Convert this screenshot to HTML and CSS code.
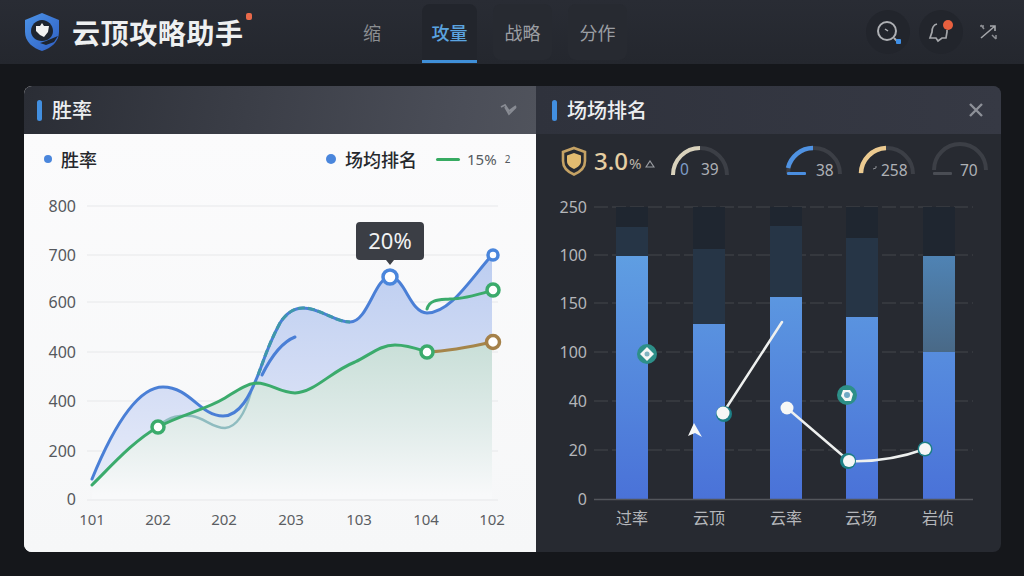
FILE: index.html
```html
<!DOCTYPE html>
<html lang="zh">
<head>
<meta charset="utf-8">
<title>云顶攻略助手</title>
<link rel="stylesheet" href="styles.css">
</head>
<body>
<header class="topbar">
  <div class="brand">
    <svg class="logo" width="36" height="40" viewBox="0 0 36 40">
      <defs>
        <linearGradient id="lg" x1="0" y1="0" x2="1" y2="1"><stop offset="0" stop-color="#4c93e6"/><stop offset="1" stop-color="#2f5fc4"/></linearGradient>
      </defs>
      <path d="M18 1 L35 8 V20 C35 30 27 36 18 39 C9 36 1 30 1 20 V8 Z" fill="url(#lg)"/>
      <path d="M18 8 C24 8 29 13 29 19 C29 25 24 29 18 29 C12 29 7 25 7 19 C7 13 12 8 18 8 Z" fill="#1e2530"/>
      <path d="M34 24 L22 29 L16 31 L22 33 L30 30 Z" fill="#1e2530"/>
      <path d="M18 11 L20 14 L25 14 L24 20 L20 25 L16 23 L12 19 L12 14 L16 14 Z" fill="#f1f2f2"/>
    </svg>
    <span class="brand-name">云顶攻略助手</span>
    <i class="brand-dot"></i>
  </div>
  <nav class="tabs">
    <a class="tab tab-plain">缩</a>
    <a class="tab tab-on">攻量</a>
    <a class="tab tab-wide">战略</a>
    <a class="tab tab-wide">分作</a>
  </nav>
  <div class="actions">
    <span class="action">
      <svg width="44" height="44" viewBox="0 0 44 44">
        <circle cx="21" cy="21" r="9" fill="none" stroke="#aeb0b4" stroke-width="2"/>
        <path d="M19 19 L22 21" stroke="#aeb0b4" stroke-width="1.5"/>
        <path d="M28 28 L32 32" stroke="#aeb0b4" stroke-width="2"/>
        <rect x="30" y="29" width="5" height="5" rx="1" fill="#3f8fe6"/>
      </svg>
    </span>
    <span class="action">
      <svg width="44" height="44" viewBox="0 0 44 44">
        <path d="M18 14 C14 15 13 19 13 22 L11 28 H17 L19 31 L23 28 H27 L28 22 V20" fill="none" stroke="#a5a7ab" stroke-width="1.7"/>
        <circle cx="29" cy="15" r="5" fill="#e8603f"/>
      </svg>
    </span>
    <svg class="expand" width="24" height="24" viewBox="0 0 24 24">
      <path d="M5 18 L19 6 M14 6 H19 V11" fill="none" stroke="#a5a7ab" stroke-width="1.6"/>
      <path d="M4 6 L8 6 M5 5 L8 9 M16 15 L20 19 M20 15 V19" fill="none" stroke="#8d8f94" stroke-width="1.5"/>
    </svg>
  </div>
</header>

<main class="page">
  <section class="panel">
    <article class="card card-light">
      <div class="card-head head-left">
        <i class="accent"></i>
        <h2 class="card-title">胜率</h2>
        <svg class="head-icon" width="18" height="12" viewBox="0 0 18 12"><path d="M1 3 L5 1 L9 7 L16 2 M5 3 L9 10 L16 3" fill="none" stroke="#888b93" stroke-width="1.8"/></svg>
      </div>
      <div class="light-body">
        <div class="legend">
          <i class="dot dot-small"></i><span class="legend-name">胜率</span>
          <i class="dot dot-big"></i><span class="legend-name legend-wide">场均排名</span>
          <i class="legend-line"></i><span class="legend-val">15%</span><span class="legend-mini">2</span>
        </div>
        <svg class="chart" width="512" height="362" viewBox="24 190 512 362">
          <defs>
            <linearGradient id="blueFill" gradientUnits="userSpaceOnUse" x1="0" y1="255" x2="0" y2="480"><stop offset="0" stop-color="#bccdf0"/><stop offset="0.6" stop-color="#d5def5"/><stop offset="1" stop-color="#e6ebf9"/></linearGradient>
            <linearGradient id="greenFill" gradientUnits="userSpaceOnUse" x1="0" y1="345" x2="0" y2="495"><stop offset="0" stop-color="#c9dfd8"/><stop offset="0.55" stop-color="#e1ecea"/><stop offset="1" stop-color="#f8f9fa"/></linearGradient>
          </defs>
          <g class="grid-light">
            <path d="M87 206H498M87 255H498M87 302H498M87 352H498M87 401H498M87 451H498M87 500H498"/>
          </g>
          <path fill="url(#blueFill)" d="M92 479 C110 435 135 387 163 387 C190 387 200 416 223 416 C240 416 250 395 258 375 C262 365 268 345 280 323 C287 312 295 308 303 308 C320 308 335 322 350 322 C368 322 375 277 390 277 C405 277 410 313 427 313 C450 313 470 280 492 255 V499 H92 Z"/>
          <path fill="url(#greenFill)" d="M92 485 C115 462 135 440 158 427 C180 415 205 410 225 398 C235 392 245 384 257 383 C270 383 280 393 295 393 C315 392 330 372 355 362 C370 355 380 345 395 345 C408 345 418 349 427 352 C450 351 470 347 492 342 V499 H92 Z"/>
          <g class="axis-light">
            <text x="76" y="212">800</text><text x="76" y="261">700</text><text x="76" y="308">600</text><text x="76" y="358">400</text><text x="76" y="407">400</text><text x="76" y="457">200</text><text x="76" y="505">0</text>
          </g>
          <g class="xaxis-light">
            <text x="92" y="525">101</text><text x="158" y="525">202</text><text x="224" y="525">202</text><text x="291" y="525">203</text><text x="359" y="525">103</text><text x="426" y="525">104</text><text x="492" y="525">102</text>
          </g>
          <path class="ln ln-soft" d="M160 425 C170 416 180 415 192 416 C205 418 212 428 225 428 C238 427 246 410 251 392"/>
          <path class="ln ln-blue" d="M92 479 C110 435 135 387 163 387 C190 387 200 416 223 416 C240 416 250 395 258 375 C262 365 268 345 280 323 C287 312 295 308 303 308 C320 308 335 322 350 322 C368 322 375 277 390 277 C405 277 410 313 427 313 C450 313 470 280 492 255"/>
          <path class="ln ln-dash" d="M258 375 C262 365 268 345 280 323 C287 312 295 308 303 308 C320 308 335 322 350 322"/>
          <path class="ln ln-blue" d="M262 375 C272 355 282 342 295 337"/>
          <path class="ln ln-green" d="M92 485 C115 462 135 440 158 427 C180 415 205 410 225 398 C235 392 245 384 257 383 C270 383 280 393 295 393 C315 392 330 372 355 362 C370 355 380 345 395 345 C408 345 418 349 427 352"/>
          <path class="ln ln-green" d="M427 309 C430 299 440 300 450 299 C465 299 480 294 493 290"/>
          <path class="ln ln-brown" d="M427 352 C450 351 470 347 492 342"/>
          <circle class="pt pt-blue" cx="390" cy="277" r="7"/>
          <circle class="pt pt-blue" cx="493" cy="255" r="5"/>
          <circle class="pt pt-green" cx="158" cy="427" r="6"/>
          <circle class="pt pt-green" cx="427" cy="352" r="6"/>
          <circle class="pt pt-green" cx="493" cy="290" r="6"/>
          <circle class="pt pt-brown" cx="493" cy="342" r="6.5"/>
          <path class="tip-box" d="M360 222 H420 Q424 222 424 226 V256 Q424 260 420 260 H394 L390 265 L386 260 H360 Q356 260 356 256 V226 Q356 222 360 222 Z"/>
          <text class="tip-text" x="390" y="249">20%</text>
        </svg>
      </div>
    </article>

    <article class="card card-dark">
      <div class="card-head head-right">
        <i class="accent"></i>
        <h2 class="card-title">场场排名</h2>
        <svg class="head-icon" width="18" height="18" viewBox="0 0 18 18"><path d="M3 3 L15 15 M15 3 L3 15" stroke="#8d9098" stroke-width="2.4"/></svg>
      </div>
      <div class="stats">
        <svg class="shield" width="26" height="30" viewBox="0 0 26 30">
          <path d="M13 2 L24 6 V15 C24 22 19 26 13 28.500 C7 26 2 22 2 15 V6 Z" fill="none" stroke="#c5a264" stroke-width="2.6"/>
          <path d="M13 7 L20 9.500 V15 C20 19 17 21 13 23 C9 21 6 19 6 15 V9.500 Z" fill="#e2bb70"/>
        </svg>
        <span class="stat-main">3.0</span><span class="stat-unit">%</span>
        <svg class="stat-tri" width="10" height="8" viewBox="0 0 10 8"><path d="M5 1 L9 7 H1 Z" fill="none" stroke="#9a9da3" stroke-width="1.2"/></svg>
        <svg class="gauge gauge-a" width="58" height="32" viewBox="0 0 58 32">
          <path class="g-track" d="M2 29 A27 27 0 0 1 56 29"/>
          <path class="g-cream" d="M2 29 A27 27 0 0 1 29 2"/>
          <text class="g-blue" x="9" y="29">0</text><text class="g-num" x="30" y="29">39</text>
        </svg>
        <svg class="gauge gauge-b" width="56" height="32" viewBox="0 0 56 32">
          <path class="g-track" d="M2 28 A26 26 0 0 1 54 28"/>
          <path class="g-sky" d="M2 22 A26 26 0 0 1 27 2"/>
          <rect x="1" y="26" width="19" height="3" rx="1" fill="#4a8ee0"/>
          <text class="g-num" x="30" y="30">38</text>
        </svg>
        <svg class="gauge" width="56" height="32" viewBox="0 0 56 32">
          <path class="g-track" d="M2 28 A26 26 0 0 1 54 28"/>
          <path class="g-gold" d="M2 27 A26 26 0 0 1 27 2"/>
          <path d="M14 23 L17 22 V20" fill="none" stroke="#8d9096" stroke-width="1"/>
          <text class="g-num" x="22" y="30">258</text>
        </svg>
        <svg class="gauge" width="56" height="32" viewBox="0 0 56 32">
          <path class="g-track" d="M2 24 A26 26 0 0 1 54 24"/>
          <rect x="1" y="26" width="19" height="3" rx="1" fill="#4a4d54"/>
          <text class="g-num" x="28" y="30">70</text>
        </svg>
      </div>
      <svg class="chart" width="465" height="362" viewBox="536 190 465 362">
        <defs>
          <linearGradient id="barFill" gradientUnits="userSpaceOnUse" x1="0" y1="256" x2="0" y2="499"><stop offset="0" stop-color="#5f9ee2"/><stop offset="1" stop-color="#4a72d8"/></linearGradient>
          <linearGradient id="barMid" gradientUnits="userSpaceOnUse" x1="0" y1="256" x2="0" y2="352"><stop offset="0" stop-color="#4f83b4"/><stop offset="1" stop-color="#496987"/></linearGradient>
        </defs>
        <path class="grid-dark" d="M594 207H973M594 255H973M594 303H973M594 352H973M594 401H973M594 450H973"/>
        <g class="bars">
          <rect class="b-dark" x="616" y="207" width="32" height="20"/><rect class="b-mid" x="616" y="227" width="32" height="29"/><rect class="b-on" x="616" y="256" width="32" height="243"/>
          <rect class="b-dark" x="693" y="207" width="32" height="42"/><rect class="b-mid" x="693" y="249" width="32" height="75"/><rect class="b-on" x="693" y="324" width="32" height="175"/>
          <rect class="b-dark" x="770" y="207" width="32" height="19"/><rect class="b-mid" x="770" y="226" width="32" height="71"/><rect class="b-on" x="770" y="297" width="32" height="202"/>
          <rect class="b-dark" x="846" y="207" width="32" height="31"/><rect class="b-mid" x="846" y="238" width="32" height="79"/><rect class="b-on" x="846" y="317" width="32" height="182"/>
          <rect class="b-dark" x="923" y="207" width="32" height="49"/><rect class="b-fade" x="923" y="256" width="32" height="96"/><rect class="b-on" x="923" y="352" width="32" height="147"/>
        </g>
        <path class="base-dark" d="M594 499.500H973"/>
        <g class="axis-dark">
          <text x="587" y="213">250</text><text x="587" y="261">100</text><text x="587" y="309">150</text><text x="587" y="358">100</text><text x="587" y="407">40</text><text x="587" y="456">20</text><text x="587" y="505">0</text>
        </g>
        <g class="xaxis-dark">
          <text x="632" y="524">过率</text><text x="709" y="524">云顶</text><text x="786" y="524">云率</text><text x="861" y="524">云场</text><text x="938" y="524">岩侦</text>
        </g>
        <path class="wline" d="M723 413 L782 322"/>
        <path class="wline" d="M787 408 L849 461 C875 462 900 458 925 449"/>
        <circle class="ring" cx="724" cy="414" r="8"/><circle class="wdot" cx="723" cy="413" r="6.500"/>
        <circle class="wdot" cx="787" cy="408" r="6.500"/>
        <circle class="ring" cx="848" cy="461" r="8"/><circle class="wdot" cx="849" cy="461" r="6"/>
        <circle class="ring" cx="925" cy="449" r="7.500"/><circle class="wdot" cx="925" cy="449" r="6"/>
        <circle class="ring-soft" cx="647" cy="354" r="10"/><path class="wdot" d="M647 347 L654 354 L647 361 L640 354 Z"/><circle cx="647" cy="354" r="2.500" fill="#7fb3c0"/>
        <circle class="ring-soft" cx="847" cy="395" r="10"/><path class="wdot" d="M843 390 H850 L853 394 L851 401 H845 L841 396 Z"/><circle cx="847" cy="395" r="3" fill="#6fa8c4"/>
        <path class="wdot" d="M694 423 L702 437 L695 433 L688 436 Z"/>
      </svg>
    </article>
  </section>
</main>
</body>
</html>
```
FILE: styles.css
```css
* { box-sizing: border-box; }
html, body { margin: 0; height: 100%; }
body {
  width: 1024px;
  height: 576px;
  overflow: hidden;
  display: flex;
  flex-direction: column;
  background: #15171b;
  font-family: "Noto Sans", "Noto Sans CJK SC", sans-serif;
}
.topbar {
  height: 64px;
  flex: none;
  display: flex;
  align-items: stretch;
  background: linear-gradient(#292c34, #24272e);
  padding-left: 24px;
}
.brand {
  position: relative;
  width: 320px;
  display: flex;
  align-items: center;
  gap: 12px;
}
.logo { flex: none; margin-bottom: 0; }
.brand-name {
  font: 700 28px/1 "Noto Sans CJK SC", sans-serif;
  letter-spacing: 0.6px;
  color: #eef0f1;
}
.brand-dot {
  position: absolute;
  left: 222px;
  top: 13px;
  width: 6px;
  height: 7px;
  border-radius: 2px;
  background: #e8694a;
}
.tabs { display: flex; gap: 16px; height: 60px; margin-top: 4px; }
.tab {
  width: 59px;
  display: flex;
  align-items: center;
  justify-content: center;
  height: 56px;
  font: 400 18px/1 "Noto Sans CJK SC", sans-serif;
  color: #9b9ea3;
  border-radius: 8px;
  background: #272a31;
}
.tab-plain { width: 56px; margin-right: 6px; background: none; color: #8b8e92; }
.tab-on {
  width: 55px;
  height: 59px;
  color: #5ba4e0;
  font-weight: 500;
  border-radius: 8px 8px 0 0;
  background: #22252c;
  border-bottom: 3px solid #3f8fd8;
}
.actions {
  margin-left: auto;
  display: flex;
  align-items: center;
  gap: 9px;
  padding-right: 24px;
}
.action {
  width: 44px;
  height: 44px;
  border-radius: 50%;
  background: #22252c;
}
.action svg { display: block; }
.expand { margin-left: 4px; }
.page {
  flex: 1;
  padding: 22px 23px 24px 24px;
  display: flex;
  min-height: 0;
}
.panel {
  flex: 1;
  display: flex;
  border-radius: 8px;
  overflow: hidden;
}
.card { display: flex; flex-direction: column; }
.card-light { width: 512px; background: #fafbfb; }
.card-dark { flex: 1; background: #272a31; }
.card-head {
  height: 48px;
  flex: none;
  display: flex;
  align-items: center;
}
.head-left { padding: 0 18px 0 13px; background: linear-gradient(100deg, #2a2d35, #4b4e58 85%, #50535c); }
.head-right { padding: 0 16px 0 16px; background: linear-gradient(90deg, #2f323c, #363944); }
.accent {
  width: 5px;
  height: 21px;
  border-radius: 3px;
  background: #428fe0;
  margin-right: 10px;
}
.card-title {
  margin: 0;
  font: 500 20px/1 "Noto Sans CJK SC", sans-serif;
  color: #eceef0;
}
.head-icon { margin-left: auto; }
.light-body {
  flex: 1;
  display: flex;
  flex-direction: column;
  background: linear-gradient(#fbfbfc, #f6f7f8);
}
.legend {
  height: 56px;
  flex: none;
  display: flex;
  align-items: center;
  padding-left: 20px;
  padding-bottom: 6px;
  color: #26282c;
}
.dot { border-radius: 50%; background: #4a86dc; flex: none; }
.dot-small { width: 8px; height: 8px; margin-right: 9px; }
.dot-big { width: 10px; height: 10px; margin: 0 9px 0 229px; }
.legend-name { font: 500 18px/1 "Noto Sans CJK SC", sans-serif; }
.legend-wide { margin-right: 19px; }
.legend-line { width: 24px; height: 3px; border-radius: 2px; background: #37ab62; margin-right: 7px; }
.legend-val { font-size: 15px; color: #555a60; }
.legend-mini { font-size: 10px; color: #555a60; margin-left: 8px; }
.chart { display: block; flex: none; }
.grid-light path { fill: none; stroke: #e7e8ea; stroke-width: 1; }
.axis-light text { font-size: 16px; fill: #55585d; text-anchor: end; }
.xaxis-light text { font-size: 15px; fill: #5b5e63; text-anchor: middle; }
.ln { fill: none; stroke-width: 3; stroke-linecap: round; }
.ln-blue { stroke: #4a7fd6; }
.ln-dash { stroke: #3f98aa; stroke-dasharray: 7 3; stroke-linecap: butt; }
.ln-green { stroke: #3bab6c; }
.ln-brown { stroke: #a5854a; }
.ln-soft { stroke: #8fbcc0; stroke-width: 2.5; }
.pt { fill: #fff; stroke-width: 3.5; }
.pt-blue { stroke: #4a86dc; }
.pt-green { stroke: #3bab6c; }
.pt-brown { stroke: #a5814a; }
.tip-box { fill: #3b3e45; }
.tip-text { font-size: 22px; fill: #f1f2f3; text-anchor: middle; }
.stats {
  height: 56px;
  flex: none;
  display: flex;
  align-items: center;
  padding: 0 0 2px 25px;
}
.shield { flex: none; margin-right: 7px; }
.stat-main { font-size: 24px; font-weight: 500; color: #e6cfa3; line-height: 1; }
.stat-unit { font-size: 15px; color: #b9b4a8; margin: 4px 0 0 1px; }
.stat-tri { margin: 5px 0 0 4px; }
.gauge { flex: none; margin-left: 17px; margin-top: 2px; overflow: visible; }
.gauge-a { margin-left: 16px; }
.gauge-b { margin-left: 57px; }
.g-track { fill: none; stroke: #3c3f46; stroke-width: 4; }
.g-cream { fill: none; stroke: #d9d2bc; stroke-width: 4; }
.g-sky { fill: none; stroke: #4f92e2; stroke-width: 4.500; }
.g-gold { fill: none; stroke: #ecca90; stroke-width: 4.500; }
.g-num { font-size: 15.500px; fill: #aeb1b6; }
.g-blue { font-size: 15.500px; fill: #7e9dc8; }
.grid-dark { fill: none; stroke: #45474d; stroke-width: 1; stroke-dasharray: 14 4; }
.base-dark { stroke: #53565c; stroke-width: 1.500; }
.axis-dark text { font-size: 16px; fill: #b4b6ba; text-anchor: end; }
.xaxis-dark text { font: 400 16px "Noto Sans CJK SC", sans-serif; fill: #b4b6ba; text-anchor: middle; }
.b-dark { fill: #1f2630; }
.b-mid { fill: #263546; }
.b-on { fill: url(#barFill); }
.b-fade { fill: url(#barMid); }
.wline { fill: none; stroke: #eef0ef; stroke-width: 2.500; stroke-linecap: round; }
.wdot { fill: #f6f7f6; }
.ring { fill: #1d7f86; }
.ring-soft { fill: #2d8f88; }
```
